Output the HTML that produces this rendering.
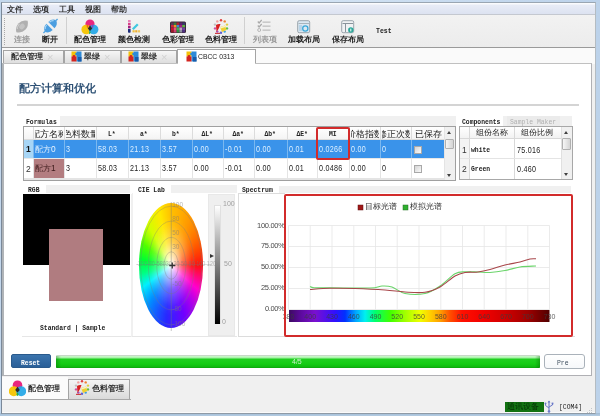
<!DOCTYPE html>
<html><head><meta charset="utf-8">
<style>
*{margin:0;padding:0;box-sizing:border-box}
html,body{width:600px;height:416px;overflow:hidden;background:#c9dcef;font-family:"Liberation Sans",sans-serif;color:#222}
.a{position:absolute}
.m{font-family:"Liberation Mono",monospace;white-space:nowrap}
.cj{font-size:8px;line-height:8px;white-space:nowrap;font-weight:bold;color:#333}
body{will-change:transform}
.num{font-family:"Liberation Sans",sans-serif;font-size:8.5px;line-height:8px;transform:scaleX(.84);transform-origin:0 0;letter-spacing:.3px}
.hd{font-size:8px;line-height:8px;font-weight:bold;transform:scaleX(.8);transform-origin:0 0}
</style></head><body>

<div class="a" style="left:0px;top:0px;width:600px;height:416px;background:linear-gradient(90deg,#c3d7ec,#d4e4f4 50%,#bcd2ea)"></div>
<div class="a" style="left:0px;top:413px;width:600px;height:3px;background:linear-gradient(#9fbad4,#b4cce2)"></div>
<div class="a" style="left:1px;top:2px;width:595px;height:412px;border-left:1px solid #7a8898;border-top:1px solid #9aa6b2;border-right:1px solid #b4bcc2;border-bottom:1px solid #8e9aa6;background:#f0f0f0"></div>
<div class="a" style="left:2px;top:3px;width:593px;height:12px;background:linear-gradient(#fafbfd 0px,#fafbfd 1px,#e8ecf6 2px,#dce2f1 11px);border-bottom:1px solid #c4c8d0"></div>
<div class="a cj" style="left:7px;top:6px;">文件</div>
<div class="a cj" style="left:33px;top:6px;">选项</div>
<div class="a cj" style="left:59px;top:6px;">工具</div>
<div class="a cj" style="left:85px;top:6px;">视图</div>
<div class="a cj" style="left:111px;top:6px;">帮助</div>
<div class="a" style="left:2px;top:15px;width:593px;height:33px;background:linear-gradient(#f2f2f2,#ececec);border-bottom:1px solid #9a9a9a"></div>
<div class="a" style="left:4px;top:18px;width:1px;height:27px;border-left:1px dotted #a8a8a8"></div>
<div class="a" style="left:66px;top:17px;width:1px;height:27px;background:#d0d0d0"></div>
<div class="a" style="left:244px;top:17px;width:1px;height:27px;background:#d0d0d0"></div>
<div class="a cj" style="left:14px;top:36px;color:#9a9a9a">连接</div>
<div class="a cj" style="left:42px;top:36px;color:#222">断开</div>
<div class="a cj" style="left:74px;top:36px;color:#222">配色管理</div>
<div class="a cj" style="left:118px;top:36px;color:#222">颜色检测</div>
<div class="a cj" style="left:162px;top:36px;color:#222">色彩管理</div>
<div class="a cj" style="left:205px;top:36px;color:#222">色料管理</div>
<div class="a cj" style="left:253px;top:36px;color:#9a9a9a">列表项</div>
<div class="a cj" style="left:288px;top:36px;color:#222">加载布局</div>
<div class="a cj" style="left:332px;top:36px;color:#222">保存布局</div>
<div class="a m" style="left:376px;top:28px;font-size:6.5px;font-weight:bold;line-height:7px">Test</div>
<svg class="a" style="left:14px;top:19px" width="16" height="15" viewBox="0 0 16 15"><g transform="rotate(-45 8 7.5)"><path d="M0 7.5 Q3 2.8 8 2.8 Q13 2.8 16 7.5 Q13 12.2 8 12.2 Q3 12.2 0 7.5Z" fill="#b0b0b0"/><ellipse cx="8" cy="7.5" rx="3" ry="2.4" fill="#c4c4c4"/><path d="M3 6 Q5 4 8 3.8" stroke="#d0d0d0" stroke-width="1" fill="none"/></g></svg>
<svg class="a" style="left:42px;top:18px" width="17" height="16" viewBox="0 0 17 16"><g transform="rotate(-45 8.5 8)"><path d="M0.5 8 Q2 3.6 7.2 3.6 V12.4 Q2 12.4 0.5 8Z" fill="#4a9ee0"/><path d="M16.5 8 Q15 3.6 9.8 3.6 V12.4 Q15 12.4 16.5 8Z" fill="#4a9ee0"/><rect x="-1.5" y="7.3" width="3" height="1.4" fill="#5aa8e4"/><rect x="15.5" y="7.3" width="3" height="1.4" fill="#5aa8e4"/><path d="M2.5 6.5 Q4 4.6 6.6 4.6" stroke="#a8d6f6" stroke-width="1.1" fill="none"/><path d="M10.4 4.6 Q13 4.6 14.5 6.5" stroke="#a8d6f6" stroke-width="1.1" fill="none"/></g></svg>
<svg class="a" style="left:81px;top:19px" width="18" height="16" viewBox="0 0 18 16"><circle cx="9" cy="5" r="4.6" fill="#e8267e"/><circle cx="5.2" cy="10.5" r="4.8" fill="#f6c400" fill-opacity=".95"/><circle cx="12.6" cy="10.5" r="4.8" fill="#22a6e6" fill-opacity=".92"/><path d="M9 6.5 L11.3 9.5 L9 12 L6.8 9.5Z" fill="#2a2a2a"/><path d="M9 12 Q7 14.5 8.8 15 Q10.5 14 9 12Z" fill="#20b040"/><path d="M6.8 9.5 Q5 7 6 5.5 Q8 6 6.8 9.5Z" fill="#e8582a"/><path d="M11.3 9.5 Q13 7 12 5.5 Q10 6 11.3 9.5Z" fill="#8a40c0"/></svg>
<svg class="a" style="left:126px;top:19px" width="15" height="15" viewBox="0 0 15 15"><rect x="2" y="1" width="2.6" height="2.4" fill="#e880b8"/><rect x="2" y="4" width="2.6" height="2.4" fill="#d84088"/><rect x="2" y="7" width="2.6" height="2.4" fill="#a02080"/><path d="M2 10 h2.6 v3.2 q-1.3 1.2 -2.6 0z" fill="#1a2a7a"/><path d="M6 9.5 L11 4.5 L12.6 6.1 L7.6 11.1Z" fill="#40c8e0"/><rect x="6.5" y="11.2" width="2.2" height="2.2" fill="#f0c040"/><rect x="9.2" y="11.2" width="2.2" height="2.2" fill="#f0b030"/><rect x="11.9" y="11.2" width="2.2" height="2.2" fill="#f0c860"/></svg>
<svg class="a" style="left:170px;top:21px" width="16" height="12" viewBox="0 0 16 12"><rect x="0" y="0.5" width="16" height="11.5" rx="1.5" fill="#3a2a3a"/><rect x="1.0" y="1.5" width="2.8" height="2.5" fill="#5a3a5a"/><rect x="3.8" y="1.5" width="2.8" height="2.5" fill="#3a7a3a"/><rect x="6.6" y="1.5" width="2.8" height="2.5" fill="#b02030"/><rect x="9.4" y="1.5" width="2.8" height="2.5" fill="#602070"/><rect x="12.2" y="1.5" width="2.8" height="2.5" fill="#3a3a6a"/><rect x="1.0" y="4.0" width="2.8" height="2.5" fill="#d02040"/><rect x="3.8" y="4.0" width="2.8" height="2.5" fill="#e0a020"/><rect x="6.6" y="4.0" width="2.8" height="2.5" fill="#3a8ad0"/><rect x="9.4" y="4.0" width="2.8" height="2.5" fill="#a02080"/><rect x="12.2" y="4.0" width="2.8" height="2.5" fill="#60b040"/><rect x="1.0" y="6.5" width="2.8" height="2.5" fill="#c01830"/><rect x="3.8" y="6.5" width="2.8" height="2.5" fill="#e85080"/><rect x="6.6" y="6.5" width="2.8" height="2.5" fill="#40b050"/><rect x="9.4" y="6.5" width="2.8" height="2.5" fill="#c0a0c0"/><rect x="12.2" y="6.5" width="2.8" height="2.5" fill="#7040a0"/><rect x="1.0" y="9.0" width="2.8" height="2.5" fill="#a01828"/><rect x="3.8" y="9.0" width="2.8" height="2.5" fill="#d04070"/><rect x="6.6" y="9.0" width="2.8" height="2.5" fill="#309040"/><rect x="9.4" y="9.0" width="2.8" height="2.5" fill="#9090a0"/><rect x="12.2" y="9.0" width="2.8" height="2.5" fill="#503080"/></svg>
<svg class="a" style="left:213px;top:19px" width="16" height="16" viewBox="0 0 16 16"><circle cx="8.0" cy="1.2" r="1.2" fill="#e04040"/><circle cx="11.7" cy="2.4" r="1.2" fill="#f08030"/><circle cx="14.0" cy="5.6" r="1.2" fill="#e0d040"/><circle cx="14.0" cy="9.4" r="1.2" fill="#60c040"/><circle cx="11.7" cy="12.6" r="1.2" fill="#40a0e0"/><circle cx="8.0" cy="13.8" r="1.2" fill="#6060d0"/><circle cx="4.3" cy="12.6" r="1.2" fill="#a050c0"/><circle cx="2.0" cy="9.4" r="1.2" fill="#d050a0"/><circle cx="2.0" cy="5.6" r="1.2" fill="#c0c0c0"/><circle cx="4.3" cy="2.4" r="1.2" fill="#f0a0a0"/><path d="M3 6 Q5 4.5 7.5 5 L6 9 Q5 11 3.5 13Z" fill="#d82020"/><path d="M7 8 L12 6.5 L13.5 11 L9 13Z" fill="#f0d030"/><path d="M7 8 L12 6.5 L12.5 8 L7.6 9.6Z" fill="#f8f0c0"/><rect x="2" y="13.8" width="5" height="1.2" fill="#d04040"/></svg>
<svg class="a" style="left:257px;top:19px" width="15" height="14" viewBox="0 0 15 14"><path d="M0.8 2.5 l1.3 1.5 l2.6-3" stroke="#a8a8a8" stroke-width="1.2" fill="none"/><path d="M0.8 6.5 l1.3 1.5 l2.6-3" stroke="#a8a8a8" stroke-width="1.2" fill="none"/><circle cx="2.2" cy="11" r="1.5" stroke="#b0b0b0" stroke-width="0.9" fill="none"/><rect x="5.5" y="2.5" width="8" height="1.3" fill="#c0c0c0"/><rect x="5.5" y="6.5" width="8" height="1.3" fill="#c0c0c0"/><rect x="5.5" y="10.5" width="8" height="1.3" fill="#c0c0c0"/></svg>
<svg class="a" style="left:297px;top:20px" width="14" height="14" viewBox="0 0 14 14"><rect x="0.7" y="0.7" width="12" height="12" rx="1.5" fill="#dbe8f2" stroke="#9aa4ac" stroke-width="1"/><rect x="1.5" y="3" width="10.5" height="1" fill="#a8b4bc"/><rect x="2" y="5" width="3" height="6" fill="#b8d4e8"/><circle cx="8.3" cy="8.5" r="2.6" fill="none" stroke="#3aa8d8" stroke-width="1.3"/></svg>
<svg class="a" style="left:341px;top:20px" width="14" height="14" viewBox="0 0 14 14"><rect x="0.7" y="0.7" width="12" height="12" rx="1.5" fill="#f0f2f4" stroke="#9aa4ac" stroke-width="1"/><rect x="1.5" y="3" width="10.5" height="1" fill="#8a949c"/><rect x="4" y="4" width="1" height="8" fill="#8a949c"/><circle cx="9.8" cy="10" r="2.7" fill="#2aa89a"/><rect x="9.3" y="8.6" width="1" height="2.8" fill="#fff"/></svg>
<div class="a" style="left:2px;top:48px;width:593px;height:16px;background:#fafafa"></div>
<div class="a" style="left:3px;top:50px;width:61px;height:14px;background:linear-gradient(#f6f6f6,#dcdcdc);border:1px solid #a4a4a4;border-bottom:none"></div>
<div class="a cj" style="left:11px;top:53px;">配色管理</div>
<div class="a cj" style="left:47px;top:53px;color:#d2d2d2;font-weight:normal;font-size:11px;line-height:8px">×</div>
<div class="a" style="left:64px;top:50px;width:57px;height:14px;background:linear-gradient(#f6f6f6,#dcdcdc);border:1px solid #a4a4a4;border-bottom:none"></div>
<svg class="a" style="left:71px;top:51px" width="11" height="11" viewBox="0 0 11 11"><rect x="0.5" y="0.5" width="5" height="5" fill="#f4c20a"/><rect x="5.5" y="0.5" width="5" height="10" fill="#2d8ad8"/><rect x="7" y="6" width="3.5" height="4.5" fill="#1a5aa8"/><rect x="0.5" y="5.5" width="5" height="5" fill="#d42420"/><circle cx="3" cy="5.5" r="1.4" fill="#d42420"/><circle cx="5.5" cy="3" r="1.3" fill="#2d8ad8"/></svg>
<div class="a cj" style="left:84px;top:53px;">翠绿</div>
<div class="a cj" style="left:104px;top:53px;color:#d2d2d2;font-weight:normal;font-size:11px;line-height:8px">×</div>
<div class="a" style="left:121px;top:50px;width:56px;height:14px;background:linear-gradient(#f6f6f6,#dcdcdc);border:1px solid #a4a4a4;border-bottom:none"></div>
<svg class="a" style="left:128px;top:51px" width="11" height="11" viewBox="0 0 11 11"><rect x="0.5" y="0.5" width="5" height="5" fill="#f4c20a"/><rect x="5.5" y="0.5" width="5" height="10" fill="#2d8ad8"/><rect x="7" y="6" width="3.5" height="4.5" fill="#1a5aa8"/><rect x="0.5" y="5.5" width="5" height="5" fill="#d42420"/><circle cx="3" cy="5.5" r="1.4" fill="#d42420"/><circle cx="5.5" cy="3" r="1.3" fill="#2d8ad8"/></svg>
<div class="a cj" style="left:141px;top:53px;">翠绿</div>
<div class="a cj" style="left:161px;top:53px;color:#d2d2d2;font-weight:normal;font-size:11px;line-height:8px">×</div>
<div class="a" style="left:177px;top:49px;width:79px;height:16px;background:#fff;border:1px solid #a4a4a4;border-bottom:none"></div>
<svg class="a" style="left:186px;top:51px" width="11" height="11" viewBox="0 0 11 11"><rect x="0.5" y="0.5" width="5" height="5" fill="#f4c20a"/><rect x="5.5" y="0.5" width="5" height="10" fill="#2d8ad8"/><rect x="7" y="6" width="3.5" height="4.5" fill="#1a5aa8"/><rect x="0.5" y="5.5" width="5" height="5" fill="#d42420"/><circle cx="3" cy="5.5" r="1.4" fill="#d42420"/><circle cx="5.5" cy="3" r="1.3" fill="#2d8ad8"/></svg>
<div class="a " style="left:198px;top:53px;font-size:8px;line-height:8px;color:#222;transform:scaleX(.85);transform-origin:0 0;white-space:nowrap">CBCC 0313</div>
<div class="a" style="left:2px;top:63px;width:590px;height:313px;background:#fff;border:1px solid #b0b0b4;border-left:2px solid #b0b4b8;border-top-color:#c0c0c0"></div>
<div class="a" style="left:178px;top:63px;width:77px;height:2px;background:#fff"></div>
<div class="a" style="left:19px;top:83px;font-size:11px;line-height:11px;font-weight:bold;color:#2f5276;white-space:nowrap">配方计算和优化</div>
<div class="a" style="left:17px;top:104px;width:562px;height:2px;background:#d4d4d4"></div>
<div class="a" style="left:60px;top:116px;width:396px;height:10px;background:#f0f0f0"></div>
<div class="a m hd" style="left:26px;top:118px;">Formulas</div>
<div class="a" style="left:503px;top:116px;width:69px;height:10px;background:#f0f0f0"></div>
<div class="a" style="left:507px;top:116px;width:53px;height:10px;background:#ebebeb"></div>
<div class="a m hd" style="left:462px;top:118px;">Components</div>
<div class="a m hd" style="left:510px;top:118px;color:#b0b0b0;font-weight:normal">Sample Maker</div>
<div class="a" style="left:23px;top:126px;width:433px;height:55px;border:1px solid #a0a0a0;background:#fff;overflow:hidden">
<div class="a" style="left:0;top:0;width:420px;height:13px;background:linear-gradient(#fff,#f4f4f4);border-bottom:1px solid #dcdcdc"></div>
<div class="a" style="left:0;top:13px;width:420px;height:18px;background:#3a93ea"></div>
<div class="a" style="left:0;top:13px;width:9px;height:18px;background:#a8d6f6"></div>
<div class="a" style="left:9px;top:31px;width:31px;height:20px;background:#b37d80"></div>
<div class="a" style="left:0;top:31px;width:420px;height:1px;background:#e8e8e8"></div>
<div class="a" style="left:0;top:51px;width:420px;height:2px;background:#e4e4e4"></div>
<div class="a" style="left:9px;top:0;width:1px;height:13px;background:#dcdcdc"></div>
<div class="a" style="left:9px;top:13px;width:1px;height:18px;background:#7ab8f0"></div>
<div class="a" style="left:9px;top:31px;width:1px;height:22px;background:#e4e4e4"></div>
<div class="a" style="left:40px;top:0;width:1px;height:13px;background:#dcdcdc"></div>
<div class="a" style="left:40px;top:13px;width:1px;height:18px;background:#7ab8f0"></div>
<div class="a" style="left:40px;top:31px;width:1px;height:22px;background:#e4e4e4"></div>
<div class="a" style="left:72px;top:0;width:1px;height:13px;background:#dcdcdc"></div>
<div class="a" style="left:72px;top:13px;width:1px;height:18px;background:#7ab8f0"></div>
<div class="a" style="left:72px;top:31px;width:1px;height:22px;background:#e4e4e4"></div>
<div class="a" style="left:104px;top:0;width:1px;height:13px;background:#dcdcdc"></div>
<div class="a" style="left:104px;top:13px;width:1px;height:18px;background:#7ab8f0"></div>
<div class="a" style="left:104px;top:31px;width:1px;height:22px;background:#e4e4e4"></div>
<div class="a" style="left:136px;top:0;width:1px;height:13px;background:#dcdcdc"></div>
<div class="a" style="left:136px;top:13px;width:1px;height:18px;background:#7ab8f0"></div>
<div class="a" style="left:136px;top:31px;width:1px;height:22px;background:#e4e4e4"></div>
<div class="a" style="left:168px;top:0;width:1px;height:13px;background:#dcdcdc"></div>
<div class="a" style="left:168px;top:13px;width:1px;height:18px;background:#7ab8f0"></div>
<div class="a" style="left:168px;top:31px;width:1px;height:22px;background:#e4e4e4"></div>
<div class="a" style="left:199px;top:0;width:1px;height:13px;background:#dcdcdc"></div>
<div class="a" style="left:199px;top:13px;width:1px;height:18px;background:#7ab8f0"></div>
<div class="a" style="left:199px;top:31px;width:1px;height:22px;background:#e4e4e4"></div>
<div class="a" style="left:230px;top:0;width:1px;height:13px;background:#dcdcdc"></div>
<div class="a" style="left:230px;top:13px;width:1px;height:18px;background:#7ab8f0"></div>
<div class="a" style="left:230px;top:31px;width:1px;height:22px;background:#e4e4e4"></div>
<div class="a" style="left:263px;top:0;width:1px;height:13px;background:#dcdcdc"></div>
<div class="a" style="left:263px;top:13px;width:1px;height:18px;background:#7ab8f0"></div>
<div class="a" style="left:263px;top:31px;width:1px;height:22px;background:#e4e4e4"></div>
<div class="a" style="left:293px;top:0;width:1px;height:13px;background:#dcdcdc"></div>
<div class="a" style="left:293px;top:13px;width:1px;height:18px;background:#7ab8f0"></div>
<div class="a" style="left:293px;top:31px;width:1px;height:22px;background:#e4e4e4"></div>
<div class="a" style="left:325px;top:0;width:1px;height:13px;background:#dcdcdc"></div>
<div class="a" style="left:325px;top:13px;width:1px;height:18px;background:#7ab8f0"></div>
<div class="a" style="left:325px;top:31px;width:1px;height:22px;background:#e4e4e4"></div>
<div class="a" style="left:356px;top:0;width:1px;height:13px;background:#dcdcdc"></div>
<div class="a" style="left:356px;top:13px;width:1px;height:18px;background:#7ab8f0"></div>
<div class="a" style="left:356px;top:31px;width:1px;height:22px;background:#e4e4e4"></div>
<div class="a" style="left:387px;top:0;width:1px;height:13px;background:#dcdcdc"></div>
<div class="a" style="left:387px;top:13px;width:1px;height:18px;background:#7ab8f0"></div>
<div class="a" style="left:387px;top:31px;width:1px;height:22px;background:#e4e4e4"></div>
<div class="a" style="left:11px;top:2px;width:28px;height:10px;overflow:hidden"><div class="a cj" style="left:50%;top:1px;transform:translateX(-50%);font-weight:normal;color:#222;font-size:8.5px">配方名称</div></div>
<div class="a" style="left:42px;top:2px;width:29px;height:10px;overflow:hidden"><div class="a cj" style="left:50%;top:1px;transform:translateX(-50%);font-weight:normal;color:#222;font-size:8.5px">色料数量</div></div>
<div class="a" style="left:72px;top:3px;width:32px;text-align:center;line-height:8px;font-size:8px"><span class="m hd" style="display:inline-block;transform-origin:50% 0">L*</span></div>
<div class="a" style="left:104px;top:3px;width:32px;text-align:center;line-height:8px;font-size:8px"><span class="m hd" style="display:inline-block;transform-origin:50% 0">a*</span></div>
<div class="a" style="left:136px;top:3px;width:32px;text-align:center;line-height:8px;font-size:8px"><span class="m hd" style="display:inline-block;transform-origin:50% 0">b*</span></div>
<div class="a" style="left:168px;top:3px;width:31px;text-align:center;line-height:8px;font-size:8px"><span class="m hd" style="display:inline-block;transform-origin:50% 0">ΔL*</span></div>
<div class="a" style="left:199px;top:3px;width:31px;text-align:center;line-height:8px;font-size:8px"><span class="m hd" style="display:inline-block;transform-origin:50% 0">Δa*</span></div>
<div class="a" style="left:230px;top:3px;width:33px;text-align:center;line-height:8px;font-size:8px"><span class="m hd" style="display:inline-block;transform-origin:50% 0">Δb*</span></div>
<div class="a" style="left:263px;top:3px;width:30px;text-align:center;line-height:8px;font-size:8px"><span class="m hd" style="display:inline-block;transform-origin:50% 0">ΔE*</span></div>
<div class="a" style="left:293px;top:3px;width:32px;text-align:center;line-height:8px;font-size:8px"><span class="m hd" style="display:inline-block;transform-origin:50% 0">MI</span></div>
<div class="a" style="left:327px;top:2px;width:28px;height:10px;overflow:hidden"><div class="a cj" style="left:50%;top:1px;transform:translateX(-50%);font-weight:normal;color:#222;font-size:8.5px">价格指数</div></div>
<div class="a" style="left:358px;top:2px;width:28px;height:10px;overflow:hidden"><div class="a cj" style="left:50%;top:1px;transform:translateX(-50%);font-weight:normal;color:#222;font-size:8.5px">修正次数</div></div>
<div class="a" style="left:389px;top:2px;width:30px;height:10px;overflow:hidden"><div class="a cj" style="left:50%;top:1px;transform:translateX(-50%);font-weight:normal;color:#222;font-size:8.5px">已保存</div></div>
<div class="a" style="left:2px;top:18px;font-size:8.5px;line-height:8px;font-weight:bold;color:#111">1</div>
<div class="a" style="left:2px;top:38px;font-size:8.5px;line-height:8px;color:#333">2</div>
<div class="a cj" style="left:11px;top:18px;color:#e8f4ff;font-weight:normal;font-size:8.4px">配方0</div>
<div class="a m num" style="left:42px;top:18px;color:#dcefff">3</div>
<div class="a m num" style="left:74px;top:18px;color:#dcefff">58.03</div>
<div class="a m num" style="left:106px;top:18px;color:#dcefff">21.13</div>
<div class="a m num" style="left:138px;top:18px;color:#dcefff">3.57</div>
<div class="a m num" style="left:170px;top:18px;color:#dcefff">0.00</div>
<div class="a m num" style="left:201px;top:18px;color:#dcefff">-0.01</div>
<div class="a m num" style="left:232px;top:18px;color:#dcefff">0.00</div>
<div class="a m num" style="left:265px;top:18px;color:#dcefff">0.01</div>
<div class="a m num" style="left:295px;top:18px;color:#dcefff">0.0266</div>
<div class="a m num" style="left:327px;top:18px;color:#dcefff">0.00</div>
<div class="a m num" style="left:358px;top:18px;color:#dcefff">0</div>
<div class="a cj" style="left:11px;top:37px;color:#3a1818;font-weight:normal;font-size:8.4px">配方1</div>
<div class="a m num" style="left:42px;top:37px;color:#222">3</div>
<div class="a m num" style="left:74px;top:37px;color:#222">58.03</div>
<div class="a m num" style="left:106px;top:37px;color:#222">21.13</div>
<div class="a m num" style="left:138px;top:37px;color:#222">3.57</div>
<div class="a m num" style="left:170px;top:37px;color:#222">0.00</div>
<div class="a m num" style="left:201px;top:37px;color:#222">-0.01</div>
<div class="a m num" style="left:232px;top:37px;color:#222">0.00</div>
<div class="a m num" style="left:265px;top:37px;color:#222">0.01</div>
<div class="a m num" style="left:295px;top:37px;color:#222">0.0486</div>
<div class="a m num" style="left:327px;top:37px;color:#222">0.00</div>
<div class="a m num" style="left:358px;top:37px;color:#222">0</div>
<div class="a" style="left:390px;top:19px;width:8px;height:8px;border:1px solid #a8a8a8;background:linear-gradient(135deg,#d4d4d4,#fafafa)"></div>
<div class="a" style="left:390px;top:38px;width:8px;height:8px;border:1px solid #a8a8a8;background:linear-gradient(135deg,#d4d4d4,#fafafa)"></div>
<div class="a" style="left:420px;top:0;width:11px;height:53px;background:#f0f0f0;border-left:1px solid #e4e4e4"></div>
<div class="a" style="left:421px;top:12px;width:9px;height:10px;background:linear-gradient(90deg,#f6f6f6,#d4d4d4);border:1px solid #b0b0b0;border-radius:1px"></div>
<div class="a" style="left:423px;top:4px;width:0;height:0;border-left:2.5px solid transparent;border-right:2.5px solid transparent;border-bottom:3px solid #404040"></div>
<div class="a" style="left:423px;top:47px;width:0;height:0;border-left:2.5px solid transparent;border-right:2.5px solid transparent;border-top:3px solid #404040"></div>
</div>
<div class="a" style="left:46px;top:185px;width:84px;height:8px;background:#f0f0f0"></div>
<div class="a m hd" style="left:28px;top:185.5px;">RGB</div>
<div class="a" style="left:23px;top:194px;width:107px;height:71px;background:#000"></div>
<div class="a" style="left:49px;top:229px;width:54px;height:72px;background:#b07c80"></div>
<div class="a m hd" style="left:40px;top:324px;">Standard | Sample</div>
<div class="a" style="left:22px;top:336px;width:109px;height:1px;background:#e6e6e6"></div>
<div class="a" style="left:131px;top:194px;width:1px;height:143px;background:#f0f0f0"></div>
<div class="a" style="left:171px;top:185px;width:66px;height:8px;background:#f0f0f0"></div>
<div class="a m hd" style="left:138px;top:186px;">CIE Lab</div>
<div class="a" style="left:132px;top:193px;width:1px;height:144px;background:#f0f0f0"></div>
<div class="a" style="left:208px;top:194px;width:27px;height:142px;background:#efefef;border:1px solid #e8e8e8"></div>
<div class="a" style="left:214px;top:205px;width:7px;height:119px;background:linear-gradient(#fff,#000);border:1px solid #e0e0e0;border-bottom:none"></div>
<div class="a " style="left:223px;top:200px;font-size:7px;line-height:7px;color:#a0a0a0">100</div>
<div class="a " style="left:224px;top:260px;font-size:7px;line-height:7px;color:#a0a0a0">50</div>
<div class="a " style="left:222px;top:318px;font-size:7px;line-height:7px;color:#a0a0a0">0</div>
<div class="a" style="left:210px;top:253.5px;width:0;height:0;border-top:2px solid transparent;border-bottom:2px solid transparent;border-left:4px solid #333"></div>
<div class="a" style="left:132px;top:336px;width:105px;height:1px;background:#e6e6e6"></div>
<div class="a" style="left:138.5px;top:202.5px;width:64.5px;height:125.0px;border-radius:50%;background:radial-gradient(ellipse closest-side,rgba(255,255,255,1) 0%,rgba(255,255,255,.8) 10%,rgba(255,255,255,.3) 38%,rgba(255,255,255,.05) 65%,rgba(255,255,255,0) 80%),conic-gradient(#ffc000 0deg,#ff9800 22deg,#ff4800 60deg,#ff1010 90deg,#ff00d0 132deg,#7000ff 165deg,#2828ff 185deg,#0090ff 210deg,#00f0ff 232deg,#00ff80 255deg,#00ff30 282deg,#50ff00 308deg,#d0ff00 330deg,#ffe800 348deg,#ffc000 360deg)"></div>
<svg class="a" style="left:103.5px;top:197.5px" width="134.5" height="135.0" viewBox="103.5 197.5 134.5 135.0"><ellipse cx="170.75" cy="265" rx="7.095" ry="13.75" fill="none" stroke="rgba(120,120,120,.45)" stroke-width="0.7"/><ellipse cx="170.75" cy="265" rx="14.512500000000001" ry="28.125" fill="none" stroke="rgba(120,120,120,.45)" stroke-width="0.7"/><ellipse cx="170.75" cy="265" rx="22.897499999999997" ry="44.375" fill="none" stroke="rgba(120,120,120,.45)" stroke-width="0.7"/><ellipse cx="170.75" cy="265" rx="30.6375" ry="59.375" fill="none" stroke="rgba(120,120,120,.45)" stroke-width="0.7"/><line x1="170.75" y1="201.5" x2="170.75" y2="330.5" stroke="rgba(120,120,120,.6)" stroke-width="0.7"/><line x1="136.5" y1="264" x2="211.0" y2="264" stroke="rgba(120,120,120,.35)" stroke-width="0.7"/><text x="171.75" y="206" font-family="Liberation Sans" font-size="6.5" fill="rgba(120,120,120,.55)">100</text><text x="171.75" y="220" font-family="Liberation Sans" font-size="6.5" fill="rgba(120,120,120,.55)">80</text><text x="171.75" y="234" font-family="Liberation Sans" font-size="6.5" fill="rgba(120,120,120,.55)">50</text><text x="171.75" y="248" font-family="Liberation Sans" font-size="6.5" fill="rgba(120,120,120,.55)">30</text><text x="171.75" y="285" font-family="Liberation Sans" font-size="6.5" fill="rgba(120,120,120,.55)">-50</text><text x="171.75" y="310" font-family="Liberation Sans" font-size="6.5" fill="rgba(120,120,120,.55)">-80</text><text x="171.75" y="325" font-family="Liberation Sans" font-size="6.5" fill="rgba(120,120,120,.55)">-100</text><text x="135.5" y="265" font-family="Liberation Sans" font-size="6.5" fill="rgba(120,120,120,.5)" textLength="80" lengthAdjust="spacingAndGlyphs">-100-80-58030 30 50 80 100 120</text><path d="M171.75 262v6M168.75 265h6" stroke="#333" stroke-width="1.3"/></svg>
<div class="a" style="left:279px;top:186px;width:292px;height:7px;background:#f0f0f0"></div>
<div class="a m hd" style="left:242px;top:185.5px;">Spectrum</div>
<div class="a" style="left:238px;top:193px;width:1px;height:144px;background:#dcdcdc"></div>
<div class="a" style="left:238px;top:193px;width:47px;height:1px;background:#dcdcdc"></div>
<div class="a" style="left:238px;top:336px;width:337px;height:1px;background:#dcdcdc"></div>
<svg class="a" style="left:238px;top:193px" width="340" height="150" viewBox="238 193 340 150"><defs><linearGradient id="sp" x1="0" x2="1" y1="0" y2="0"><stop offset="0.000" stop-color="#3c0a60"/><stop offset="0.042" stop-color="#5a0a9a"/><stop offset="0.100" stop-color="#7a10d0"/><stop offset="0.177" stop-color="#3010ff"/><stop offset="0.215" stop-color="#0030ff"/><stop offset="0.257" stop-color="#00a8ff"/><stop offset="0.292" stop-color="#00f0f0"/><stop offset="0.330" stop-color="#00ff70"/><stop offset="0.388" stop-color="#40ff00"/><stop offset="0.445" stop-color="#a0ff00"/><stop offset="0.503" stop-color="#f0ff00"/><stop offset="0.541" stop-color="#ffd000"/><stop offset="0.580" stop-color="#ffa000"/><stop offset="0.618" stop-color="#ff5000"/><stop offset="0.664" stop-color="#ff1000"/><stop offset="0.749" stop-color="#f00000"/><stop offset="0.829" stop-color="#d00000"/><stop offset="0.917" stop-color="#a00000"/><stop offset="1.000" stop-color="#500000"/></linearGradient></defs><line x1="288.5" y1="225.5" x2="288.5" y2="309.5" stroke="#e6e6e6" stroke-width="0.8"/><line x1="310.2" y1="225.5" x2="310.2" y2="309.5" stroke="#e6e6e6" stroke-width="0.8"/><line x1="332.0" y1="225.5" x2="332.0" y2="309.5" stroke="#e6e6e6" stroke-width="0.8"/><line x1="353.8" y1="225.5" x2="353.8" y2="309.5" stroke="#e6e6e6" stroke-width="0.8"/><line x1="375.5" y1="225.5" x2="375.5" y2="309.5" stroke="#e6e6e6" stroke-width="0.8"/><line x1="397.2" y1="225.5" x2="397.2" y2="309.5" stroke="#e6e6e6" stroke-width="0.8"/><line x1="419.0" y1="225.5" x2="419.0" y2="309.5" stroke="#e6e6e6" stroke-width="0.8"/><line x1="440.8" y1="225.5" x2="440.8" y2="309.5" stroke="#e6e6e6" stroke-width="0.8"/><line x1="462.5" y1="225.5" x2="462.5" y2="309.5" stroke="#e6e6e6" stroke-width="0.8"/><line x1="484.2" y1="225.5" x2="484.2" y2="309.5" stroke="#e6e6e6" stroke-width="0.8"/><line x1="506.0" y1="225.5" x2="506.0" y2="309.5" stroke="#e6e6e6" stroke-width="0.8"/><line x1="527.8" y1="225.5" x2="527.8" y2="309.5" stroke="#e6e6e6" stroke-width="0.8"/><line x1="549.5" y1="225.5" x2="549.5" y2="309.5" stroke="#e6e6e6" stroke-width="0.8"/><line x1="288.5" y1="225.5" x2="549.5" y2="225.5" stroke="#e6e6e6" stroke-width="0.8"/><line x1="288.5" y1="246.5" x2="549.5" y2="246.5" stroke="#e6e6e6" stroke-width="0.8"/><line x1="288.5" y1="267.5" x2="549.5" y2="267.5" stroke="#e6e6e6" stroke-width="0.8"/><line x1="288.5" y1="288.5" x2="549.5" y2="288.5" stroke="#e6e6e6" stroke-width="0.8"/><line x1="288.5" y1="309.5" x2="549.5" y2="309.5" stroke="#e6e6e6" stroke-width="0.8"/><rect x="289" y="310" width="260.5" height="12" fill="url(#sp)"/><text x="288.5" y="318.5" text-anchor="middle" font-family="Liberation Sans" font-size="7" fill="rgba(60,60,60,.8)">380</text><text x="310.2" y="318.5" text-anchor="middle" font-family="Liberation Sans" font-size="7" fill="rgba(60,60,60,.8)">400</text><text x="332.0" y="318.5" text-anchor="middle" font-family="Liberation Sans" font-size="7" fill="rgba(60,60,60,.8)">430</text><text x="353.8" y="318.5" text-anchor="middle" font-family="Liberation Sans" font-size="7" fill="rgba(60,60,60,.8)">460</text><text x="375.5" y="318.5" text-anchor="middle" font-family="Liberation Sans" font-size="7" fill="rgba(60,60,60,.8)">490</text><text x="397.2" y="318.5" text-anchor="middle" font-family="Liberation Sans" font-size="7" fill="rgba(60,60,60,.8)">520</text><text x="419.0" y="318.5" text-anchor="middle" font-family="Liberation Sans" font-size="7" fill="rgba(60,60,60,.8)">550</text><text x="440.8" y="318.5" text-anchor="middle" font-family="Liberation Sans" font-size="7" fill="rgba(60,60,60,.8)">580</text><text x="462.5" y="318.5" text-anchor="middle" font-family="Liberation Sans" font-size="7" fill="rgba(60,60,60,.8)">610</text><text x="484.2" y="318.5" text-anchor="middle" font-family="Liberation Sans" font-size="7" fill="rgba(60,60,60,.8)">640</text><text x="506.0" y="318.5" text-anchor="middle" font-family="Liberation Sans" font-size="7" fill="rgba(60,60,60,.8)">670</text><text x="527.8" y="318.5" text-anchor="middle" font-family="Liberation Sans" font-size="7" fill="rgba(60,60,60,.8)">700</text><text x="549.5" y="318.5" text-anchor="middle" font-family="Liberation Sans" font-size="7" fill="rgba(60,60,60,.8)">730</text><text x="257.1" y="228" font-family="Liberation Sans" font-size="7.5" fill="#4a4a4a" textLength="27.7" lengthAdjust="spacing">100.00%</text><text x="261.0" y="248" font-family="Liberation Sans" font-size="7.5" fill="#4a4a4a" textLength="23.7" lengthAdjust="spacing">75.00%</text><text x="261.0" y="269" font-family="Liberation Sans" font-size="7.5" fill="#4a4a4a" textLength="23.7" lengthAdjust="spacing">50.00%</text><text x="261.0" y="290" font-family="Liberation Sans" font-size="7.5" fill="#4a4a4a" textLength="23.7" lengthAdjust="spacing">25.00%</text><text x="264.9" y="311" font-family="Liberation Sans" font-size="7.5" fill="#4a4a4a" textLength="19.8" lengthAdjust="spacing">0.00%</text><path d="M310 286.5 C310.7 286.7 310.7 287.6 314 287.8 C317.3 288.0 320.7 287.8 330 287.8 C339.3 287.8 361.3 288.3 370 288 C378.7 287.7 378.3 286.2 382 286 C385.7 285.8 388.2 285.8 392 287 C395.8 288.2 399.5 292.4 405 293.5 C410.5 294.6 419.2 294.8 425 293.5 C430.8 292.2 435.0 289.3 440 286 C445.0 282.7 450.8 276.2 455 273.8 C459.2 271.4 461.2 272.1 465 271.8 C468.8 271.5 473.8 271.9 478 272 C482.2 272.1 485.5 272.8 490 272.5 C494.5 272.2 500.0 271.4 505 270.5 C510.0 269.6 514.8 267.8 520 267 C525.2 266.2 533.3 266.2 536 266" fill="none" stroke="#6ad46a" stroke-width="1.1"/><path d="M310 289.5 C313.3 289.3 322.5 288.5 330 288.3 C337.5 288.1 345.8 288.2 355 288.5 C364.2 288.8 376.7 289.4 385 290 C393.3 290.6 398.3 291.6 405 292 C411.7 292.4 419.2 293.1 425 292.3 C430.8 291.5 435.0 289.7 440 287 C445.0 284.3 450.8 278.4 455 276 C459.2 273.6 461.2 273.2 465 272.5 C468.8 271.8 473.8 272.5 478 272 C482.2 271.5 485.5 270.7 490 269.5 C494.5 268.3 500.0 266.2 505 265 C510.0 263.8 515.8 263.0 520 262 C524.2 261.0 527.3 259.5 530 259 C532.7 258.5 535.0 258.8 536 258.8" fill="none" stroke="#a8464a" stroke-width="1.1"/><rect x="358" y="205" width="5" height="5" fill="#a01818" stroke="#601010" stroke-width="0.5"/><rect x="403" y="205" width="5" height="5" fill="#30b030" stroke="#207020" stroke-width="0.5"/></svg>
<div class="a cj" style="left:365px;top:203px;font-weight:500;color:#333">目标光谱</div>
<div class="a cj" style="left:410px;top:203px;font-weight:500;color:#333">模拟光谱</div>
<div class="a" style="left:284px;top:194px;width:289px;height:143px;border:2px solid #d22b2b;border-radius:2px"></div>
<div class="a" style="left:316px;top:127px;width:34px;height:33px;border:2px solid #d22b2b;border-radius:2px"></div>
<div class="a" style="left:11px;top:354px;width:40px;height:14px;background:linear-gradient(#3b74ad,#2a5f98);border-radius:2px;border:1px solid #2a5a8c"></div>
<div class="a m hd" style="left:21px;top:359px;color:#fff">Reset</div>
<div class="a" style="left:56px;top:355px;width:484px;height:13px;background:linear-gradient(#c8d8c8 0px,#c8d8c8 1px,#d0fad0 1px,#a0f0a0 3px,#20d020 4px,#14cc14 9px,#10bc10 11.5px,#0ca40c 13px);border-radius:1px"></div>
<div class="a" style="left:56px;top:356px;width:5px;height:12px;background:linear-gradient(90deg,rgba(0,90,0,.35),rgba(0,90,0,0))"></div>
<div class="a" style="left:535px;top:356px;width:5px;height:12px;background:linear-gradient(270deg,rgba(0,90,0,.35),rgba(0,90,0,0))"></div>
<div class="a " style="left:292px;top:358px;font-size:7px;line-height:7px;color:#c8f0c8">4/5</div>
<div class="a" style="left:544px;top:354px;width:41px;height:15px;background:linear-gradient(#fff,#f6f8fa);border:1px solid #aab2ba;border-radius:3px"></div>
<div class="a m hd" style="left:557px;top:359px;color:#3c4c5c;font-weight:normal">Pre</div>
<div class="a" style="left:459px;top:126px;width:114px;height:54px;border:1px solid #a8a8a8;background:#fff"></div>
<div class="a" style="left:460px;top:127px;width:101px;height:12px;background:linear-gradient(#fff,#f2f2f2);border-bottom:1px solid #d8d8d8"></div>
<div class="a" style="left:460px;top:139px;width:9px;height:40px;background:#f4f4f4"></div>
<div class="a" style="left:469px;top:127px;width:1px;height:52px;background:#d8d8d8"></div>
<div class="a" style="left:514px;top:127px;width:1px;height:52px;background:#d8d8d8"></div>
<div class="a" style="left:460px;top:158px;width:101px;height:1px;background:#e4e4e4"></div>
<div class="a cj" style="left:476px;top:129px;font-weight:normal;color:#222;font-size:8px">组份名称</div>
<div class="a cj" style="left:521px;top:129px;font-weight:normal;color:#222;font-size:8px">组份比例</div>
<div class="a " style="left:462px;top:146px;font-size:8.5px;line-height:8px;color:#333">1</div>
<div class="a " style="left:462px;top:165px;font-size:8.5px;line-height:8px;color:#333">2</div>
<div class="a m hd" style="left:471px;top:146px;color:#222">white</div>
<div class="a m hd" style="left:471px;top:165px;color:#222">Green</div>
<div class="a m num" style="left:517px;top:146px;">75.016</div>
<div class="a m num" style="left:517px;top:165px;">0.460</div>
<div class="a" style="left:561px;top:127px;width:11px;height:52px;background:#f0f0f0;border-left:1px solid #e0e0e0"></div>
<div class="a" style="left:562px;top:138px;width:9px;height:12px;background:linear-gradient(90deg,#f6f6f6,#d4d4d4);border:1px solid #b0b0b0;border-radius:1px"></div>
<div class="a" style="left:564px;top:131px;width:0;height:0;border-left:2.5px solid transparent;border-right:2.5px solid transparent;border-bottom:3px solid #404040"></div>
<div class="a" style="left:564px;top:173px;width:0;height:0;border-left:2.5px solid transparent;border-right:2.5px solid transparent;border-top:3px solid #404040"></div>
<div class="a" style="left:2px;top:376px;width:593px;height:24px;background:#f0f0f0"></div>
<div class="a" style="left:2px;top:412px;width:593px;height:1px;background:#fafafa"></div>
<div class="a" style="left:2px;top:399px;width:129px;height:1px;background:#a8a8a8"></div>
<div class="a" style="left:2px;top:377px;width:66px;height:22px;background:#fbfbfb"></div>
<div class="a" style="left:68px;top:379px;width:62px;height:20px;background:linear-gradient(#f4f4f4,#dadada);border:1px solid #a4a4a4;border-bottom:none"></div>
<div class="a cj" style="left:28px;top:385px;">配色管理</div>
<div class="a cj" style="left:92px;top:385px;">色料管理</div>
<div class="a" style="left:505px;top:402px;width:39px;height:10px;background:#127212"></div>
<div class="a m hd" style="left:559px;top:403px;font-weight:normal;color:#222">[COM4]</div>
<svg class="a" style="left:9px;top:380px" width="17" height="17" viewBox="0 0 17 17"><circle cx="8.5" cy="5.2" r="4.8" fill="#e8267e"/><circle cx="4.8" cy="11.3" r="5" fill="#f6c400" fill-opacity=".95"/><circle cx="12.2" cy="11.3" r="5" fill="#22a6e6" fill-opacity=".92"/><path d="M8.5 6.8 L10.8 10 L8.5 12.6 L6.2 10Z" fill="#2a2a2a"/><path d="M8.5 12.6 Q6.5 15.5 8.5 16 Q10.5 15 8.5 12.6Z" fill="#20b040"/></svg>
<svg class="a" style="left:74px;top:380px" width="16" height="16" viewBox="0 0 16 16"><circle cx="8.0" cy="1.2" r="1.2" fill="#e04040"/><circle cx="11.7" cy="2.4" r="1.2" fill="#f08030"/><circle cx="14.0" cy="5.6" r="1.2" fill="#e0d040"/><circle cx="14.0" cy="9.4" r="1.2" fill="#60c040"/><circle cx="11.7" cy="12.6" r="1.2" fill="#40a0e0"/><circle cx="8.0" cy="13.8" r="1.2" fill="#6060d0"/><circle cx="4.3" cy="12.6" r="1.2" fill="#a050c0"/><circle cx="2.0" cy="9.4" r="1.2" fill="#d050a0"/><circle cx="2.0" cy="5.6" r="1.2" fill="#c0c0c0"/><circle cx="4.3" cy="2.4" r="1.2" fill="#f0a0a0"/><path d="M3 6 Q5 4.5 7.5 5 L6 9 Q5 11 3.5 13Z" fill="#d82020"/><path d="M7 8 L12 6.5 L13.5 11 L9 13Z" fill="#f0d030"/><path d="M7 8 L12 6.5 L12.5 8 L7.6 9.6Z" fill="#f8f0c0"/><rect x="2" y="13.8" width="5" height="1.2" fill="#d04040"/></svg>
<svg class="a" style="left:544px;top:400px" width="10" height="13" viewBox="0 0 10 13"><path d="M5 1 V11.5" stroke="#6a78c8" stroke-width="1.1"/><path d="M3.6 2.5 L5 0.5 L6.4 2.5Z" fill="#6a78c8"/><path d="M5 8 L1.5 5.5 V4" stroke="#6a78c8" stroke-width="1" fill="none"/><path d="M5 7 L8.5 5 V3.5" stroke="#6a78c8" stroke-width="1" fill="none"/><circle cx="1.5" cy="3.6" r="1" fill="#6a78c8"/><rect x="7.6" y="2.6" width="1.8" height="1.8" fill="#6a78c8"/><circle cx="5" cy="11.5" r="1.3" fill="#6a78c8"/></svg>
<div class="a cj" style="left:507px;top:403px;color:#053005;font-weight:normal">通讯设备</div>
<div class="a" style="left:591px;top:408px;width:1px;height:1px;background:#c0c4c8"></div>
<div class="a" style="left:589px;top:410px;width:1px;height:1px;background:#c0c4c8"></div>
<div class="a" style="left:591px;top:410px;width:1px;height:1px;background:#c0c4c8"></div>
<div class="a" style="left:587px;top:412px;width:1px;height:1px;background:#c0c4c8"></div>
<div class="a" style="left:589px;top:412px;width:1px;height:1px;background:#c0c4c8"></div>
<div class="a" style="left:591px;top:412px;width:1px;height:1px;background:#c0c4c8"></div>
</body></html>
